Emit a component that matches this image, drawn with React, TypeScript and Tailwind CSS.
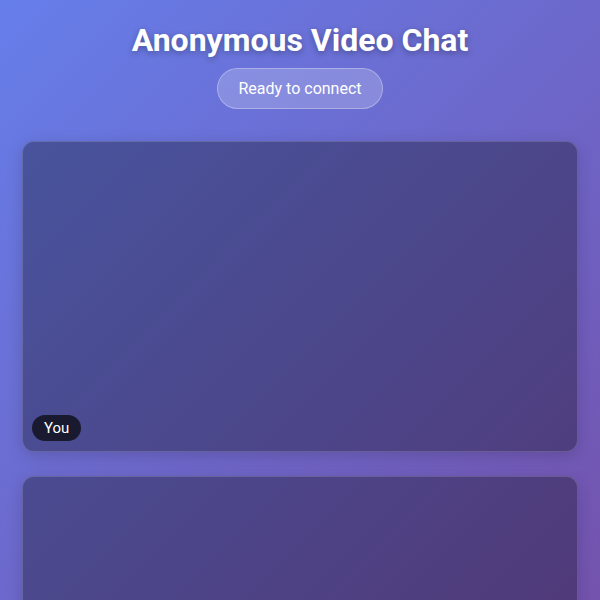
export default function App() {
    return (
        <div
            className="min-h-screen w-full bg-[linear-gradient(135deg,#667eea_0%,#764ba2_100%)] px-[22px] pt-[20px] pb-8"
            style={{ fontFamily: 'Roboto, "Noto Sans", sans-serif' }}
        >
            {/* Header */}
            <div className="flex flex-col items-center">
                <h1 className="text-[32px] leading-[40px] font-bold text-white [text-shadow:0_2px_6px_rgba(0,0,0,0.3)]">
                    Anonymous Video Chat
                </h1>
                <div className="mt-[8px] h-[41px] px-[20px] flex items-center rounded-full bg-white/20 border border-white/30 text-white text-[16px]">
                    Ready to connect
                </div>
            </div>

            {/* Videos */}
            <div className="mt-[32px] flex flex-col gap-[24px]">
                <div className="relative w-full h-[311px] rounded-[12px] bg-black/30 border border-white/15 shadow-[0_4px_16px_rgba(0,0,0,0.15)]">
                    <span className="absolute left-[9px] bottom-[10px] h-[26px] px-[12px] flex items-center rounded-full bg-[#16162a]/95 text-white text-[15px]">
                        You
                    </span>
                </div>
                <div className="relative w-full h-[311px] rounded-[12px] bg-black/30 border border-white/15 shadow-[0_4px_16px_rgba(0,0,0,0.15)]" />
            </div>
        </div>
    );
}
